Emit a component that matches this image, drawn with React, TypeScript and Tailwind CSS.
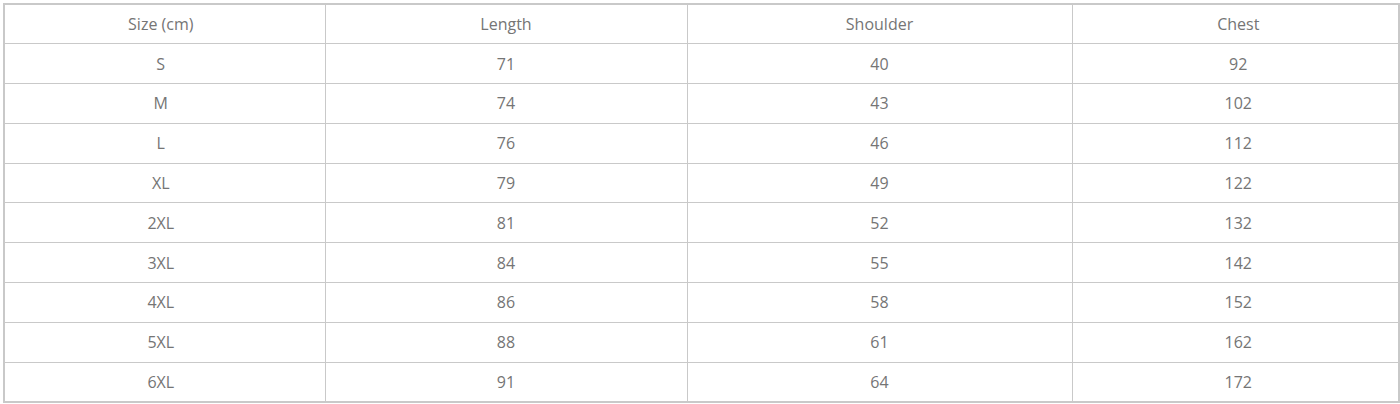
import React from 'react'

const rows = [
  ['S', '71', '40', '92'],
  ['M', '74', '43', '102'],
  ['L', '76', '46', '112'],
  ['XL', '79', '49', '122'],
  ['2XL', '81', '52', '132'],
  ['3XL', '84', '55', '142'],
  ['4XL', '86', '58', '152'],
  ['5XL', '88', '61', '162'],
  ['6XL', '91', '64', '172'],
]

const heads = ['Size (cm)', 'Length', 'Shoulder', 'Chest']
// slight off-centre text in first and last columns, like the source
const pad = ['pr-[8px]', '', '', 'pl-[6px]']

const App = () => {
  return (
    <div className="bg-white pt-[3px] pl-[3px] font-['Open_Sans',sans-serif] text-[16px] text-[#757575]">
      <table className="w-[1395px] border-collapse border-2 border-[#c9c9c9] table-fixed">
        <colgroup>
          <col className="w-[321px]" />
          <col className="w-[362px]" />
          <col className="w-[385px]" />
          <col className="w-[327px]" />
        </colgroup>
        <thead>
          <tr className="h-[39.8px]">
            {heads.map((h, i) => (
              <th key={h} className={`border border-[#c9c9c9] font-normal text-center py-0 ${pad[i]}`}>
                {h}
              </th>
            ))}
          </tr>
        </thead>
        <tbody>
          {rows.map((r) => (
            <tr key={r[0]} className="h-[39.8px]">
              {r.map((c, i) => (
                <td key={i} className={`border border-[#c9c9c9] text-center py-0 ${pad[i]}`}>
                  {c}
                </td>
              ))}
            </tr>
          ))}
        </tbody>
      </table>
    </div>
  )
}

export default App
